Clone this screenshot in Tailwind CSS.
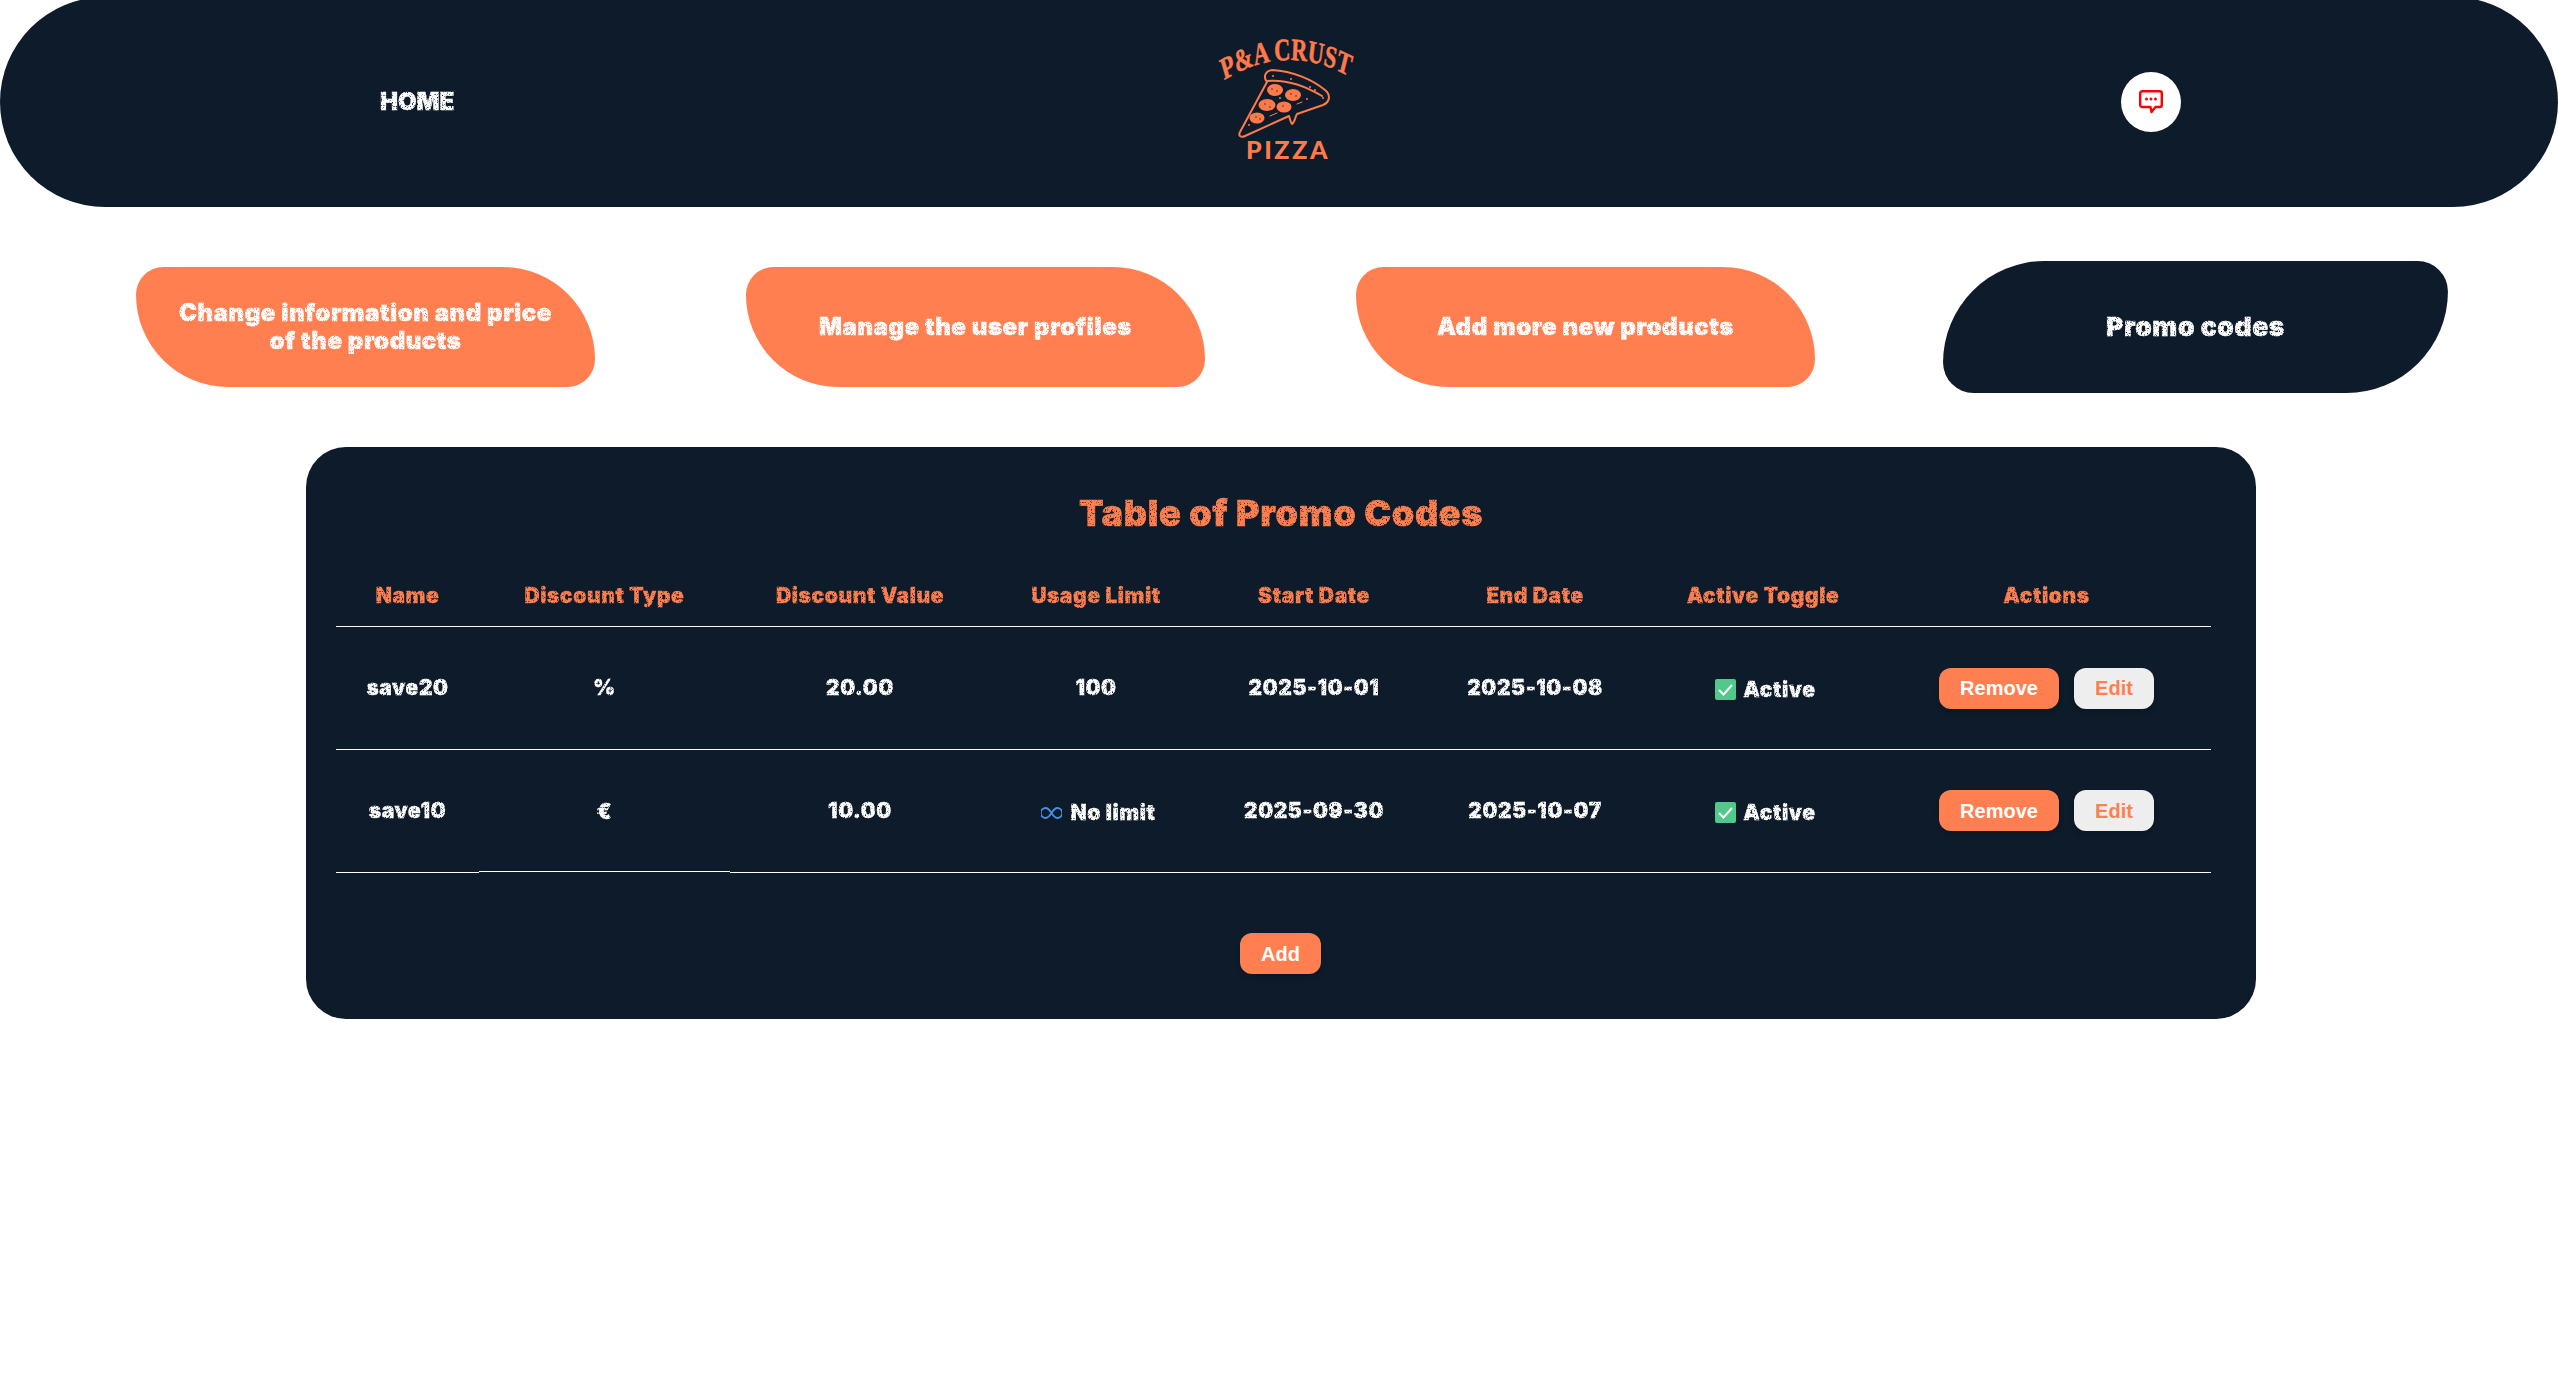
<!DOCTYPE html>
<html lang="en">
<head>
    <meta charset="UTF-8">
    <title>P&amp;A Crust Pizza - Promo Codes</title>
    <script src="https://cdn.jsdelivr.net/npm/@tailwindcss/browser@4"></script>
</head>
<body class="bg-white min-h-screen overflow-hidden font-['Inter',sans-serif]">
    <!-- speckle used on the heavy headings -->
    <svg width="0" height="0" class="absolute">
        <filter id="dirt" x="-2%" y="-10%" width="104%" height="120%">
            <feTurbulence type="fractalNoise" baseFrequency="0.8" numOctaves="2" seed="4" result="noise"/>
            <feColorMatrix in="noise" type="matrix" values="0 0 0 0 0  0 0 0 0 0  0 0 0 0 0  0 0 0 -5 3.9" result="mask"/>
            <feComposite in="SourceGraphic" in2="mask" operator="in"/>
        </filter>
    </svg>

    <!-- Header -->
    <header class="-mt-[3px] h-[210px] rounded-[105px] bg-[#0d1b2a] flex items-center justify-between pl-[380px] pr-[377px]">
        <a class="w-[73px] text-center text-[24px] font-black text-white [-webkit-text-stroke:0.5px_#fff] [filter:url(#dirt)]">HOME</a>
        <svg class="w-[160px] h-[144px]" viewBox="2 0 160 144" fill="none">
            <g transform="scale(.72 1)">
                <path id="logoArc" d="M27 50Q113 12 199 46"/>
                <text font-family="Liberation Serif" font-weight="700" font-size="31" fill="#ff7a4a" stroke="#ff7a4a" stroke-width=".6" text-anchor="middle"><textPath href="#logoArc" startOffset="50%">P&amp;A CRUST</textPath></text>
            </g>
            <g stroke="#ff7a4a" stroke-width="2" stroke-linejoin="round" stroke-linecap="round">
                <path d="M35 102L62 52C58 47 60 41 67 40C88 41 108 50 120 60C126 65 125 72 118 75L92 84C90 87 90 92 87 94C85 92 85 88 84 86L40 106C36 108 33 106 35 102Z"/>
                <path d="M62 51C84 49 102 57 117 66"/>
            </g>
            <g fill="#ff7a4a">
                <ellipse cx="70" cy="60" rx="8" ry="6"/>
                <ellipse cx="88" cy="65" rx="8" ry="6"/>
                <ellipse cx="62" cy="75" rx="8.5" ry="6"/>
                <ellipse cx="79" cy="77" rx="7.5" ry="5.5"/>
                <ellipse cx="52" cy="88" rx="7.5" ry="5.5"/>
                <circle cx="68" cy="46" r="1"/><circle cx="86" cy="49" r="1"/><circle cx="105" cy="57" r="1"/><circle cx="110" cy="60" r="1"/>
                <circle cx="75" cy="68" r="1"/><circle cx="102" cy="69" r="1"/><circle cx="44" cy="95" r="1"/><circle cx="118" cy="68" r="1"/>
            </g>
            <g fill="#0d1b2a">
                <circle cx="67" cy="59" r=".7"/><circle cx="72" cy="61" r=".7"/><circle cx="86" cy="64" r=".7"/><circle cx="91" cy="66" r=".7"/>
                <circle cx="60" cy="74" r=".7"/><circle cx="65" cy="77" r=".7"/><circle cx="78" cy="76" r=".7"/><circle cx="51" cy="87" r=".7"/><circle cx="55" cy="89" r=".7"/>
            </g>
            <path d="M65 86L72 83M92 74L97 72" stroke="#ff7a4a" stroke-width="1" stroke-linecap="round"/>
            <text x="83" y="129" font-family="Lato" font-weight="900" font-size="25" letter-spacing="2.6" fill="#ff7a4a" text-anchor="middle">PIZZA</text>
        </svg>
        <button class="w-[60px] h-[60px] rounded-full bg-white flex items-center justify-center">
            <svg class="w-6 h-6" viewBox="0 0 24 24" fill="none">
                <path d="M3.2 1.2H20.8A2 2 0 0 1 22.8 3.2V15A2 2 0 0 1 20.8 17H16.5L12.5 22L11.5 17H3.2A2 2 0 0 1 1.2 15V3.2A2 2 0 0 1 3.2 1.2Z" stroke="#ff0000" stroke-width="2.4" stroke-linejoin="round"/>
                <circle cx="7.5" cy="9" r="1.5" fill="#ff0000"/><circle cx="12" cy="9" r="1.5" fill="#ff0000"/><circle cx="16.5" cy="9" r="1.5" fill="#ff0000"/>
            </svg>
        </button>
    </header>

    <!-- Admin navigation -->
    <nav class="mt-[60px] pl-[136px] flex gap-[151px] text-[24px] leading-[28px] font-black tracking-[0.55px] text-white [-webkit-text-stroke:0.5px_#fff]">
        <a class="w-[459px] h-[120px] px-[33px] flex items-center justify-center text-center bg-[#ff7f50] rounded-[30px_100px_30px_100px]"><span class="[filter:url(#dirt)]">Change information and price of the products</span></a>
        <a class="w-[459px] h-[120px] px-[33px] flex items-center justify-center text-center bg-[#ff7f50] rounded-[30px_100px_30px_100px]"><span class="[filter:url(#dirt)]">Manage the user profiles</span></a>
        <a class="w-[459px] h-[120px] px-[33px] flex items-center justify-center text-center bg-[#ff7f50] rounded-[30px_100px_30px_100px]"><span class="[filter:url(#dirt)]">Add more new products</span></a>
        <a class="w-[459px] h-[120px] px-[33px] flex items-center justify-center text-center bg-[#0d1b2a] rounded-[100px_30px_100px_30px] scale-110"><span class="[filter:url(#dirt)]">Promo codes</span></a>
    </nav>

    <!-- Promo codes -->
    <main class="mt-[60px] ml-[306px] w-[1950px] rounded-[40px] bg-[#0d1b2a] pt-[44px] pb-[45px] px-[30px]">
        <h2 class="h-[44px] leading-[44px] text-center text-[36px] font-black tracking-[0.65px] text-[#ff7f50] [-webkit-text-stroke:0.6px_#ff7f50]"><span class="inline-block [filter:url(#dirt)]">Table of Promo Codes</span></h2>
        <table class="mt-[31px] w-[1875px] table-fixed border-separate border-spacing-0 text-[21px] tracking-[0.6px] font-black text-white text-center [-webkit-text-stroke:0.4px_currentColor]">
            <colgroup>
                <col class="w-[143px]"><col class="w-[251px]"><col class="w-[260px]"><col class="w-[212px]">
                <col class="w-[224px]"><col class="w-[218px]"><col class="w-[238px]"><col class="w-[329px]">
            </colgroup>
            <thead class="text-[#ff7f50]">
                <tr>
                    <th class="h-[61px] border-b border-white font-black"><span class="inline-block [filter:url(#dirt)]">Name</span></th>
                    <th class="h-[61px] border-b border-white font-black"><span class="inline-block [filter:url(#dirt)]">Discount Type</span></th>
                    <th class="h-[61px] border-b border-white font-black"><span class="inline-block [filter:url(#dirt)]">Discount Value</span></th>
                    <th class="h-[61px] border-b border-white font-black"><span class="inline-block [filter:url(#dirt)]">Usage Limit</span></th>
                    <th class="h-[61px] border-b border-white font-black"><span class="inline-block [filter:url(#dirt)]">Start Date</span></th>
                    <th class="h-[61px] border-b border-white font-black"><span class="inline-block [filter:url(#dirt)]">End Date</span></th>
                    <th class="h-[61px] border-b border-white font-black"><span class="inline-block [filter:url(#dirt)]">Active Toggle</span></th>
                    <th class="h-[61px] border-b border-white font-black"><span class="inline-block [filter:url(#dirt)]">Actions</span></th>
                </tr>
            </thead>
            <tbody>
                <tr>
                    <td class="h-[123px] border-b border-white"><span class="inline-block [filter:url(#dirt)]">save20</span></td>
                    <td class="h-[123px] border-b border-white"><span class="inline-block [filter:url(#dirt)]">%</span></td>
                    <td class="h-[123px] border-b border-white"><span class="inline-block [filter:url(#dirt)]">20.00</span></td>
                    <td class="h-[123px] border-b border-white"><span class="inline-block [filter:url(#dirt)]">100</span></td>
                    <td class="h-[123px] border-b border-white"><span class="inline-block [filter:url(#dirt)]">2025-10-01</span></td>
                    <td class="h-[123px] border-b border-white"><span class="inline-block [filter:url(#dirt)]">2025-10-08</span></td>
                    <td class="h-[123px] border-b border-white">
                        <div class="mt-[3px] pl-[5px] flex items-center justify-center gap-[7px]">
                            <svg class="w-[21px] h-[21px]" viewBox="0 0 21 21"><rect width="21" height="21" rx="2" fill="#50c98a"/><path d="M4 11L8.5 15.5L17 6" fill="none" stroke="#fff" stroke-width="2"/></svg>
                            <span class="[filter:url(#dirt)]">Active</span>
                        </div>
                    </td>
                    <td class="h-[123px] border-b border-white">
                        <div class="flex items-center justify-center gap-[15px] tracking-normal [-webkit-text-stroke:0]">
                            <button class="w-[120px] h-[41px] rounded-xl bg-[#ff7f50] text-white text-[20px] font-bold font-['Liberation_Sans',sans-serif] shadow-md">Remove</button>
                            <button class="w-[80px] h-[41px] rounded-xl bg-[#eeeeee] text-[#ff7f50] text-[20px] font-bold font-['Liberation_Sans',sans-serif] shadow-md">Edit</button>
                        </div>
                    </td>
                </tr>
                <tr>
                    <td class="h-[123px] border-b border-white"><span class="inline-block [filter:url(#dirt)]">save10</span></td>
                    <td class="relative h-[123px]"><span class="inline-block [filter:url(#dirt)]">€</span><i class="absolute inset-x-0 bottom-[1px] h-px bg-white"></i></td>
                    <td class="h-[123px] border-b border-white"><span class="inline-block [filter:url(#dirt)]">10.00</span></td>
                    <td class="h-[123px] border-b border-white">
                        <div class="mt-[3px] pl-[5px] flex items-center justify-center gap-[8px]">
                            <svg class="w-[21px] h-[12px]" viewBox="0 0 21 12" fill="none"><path d="M10.5 6C8.5 3 7 1 4.8 1A5 5 0 0 0 4.8 11C7 11 8.5 9 10.5 6C12.5 3 14 1 16.2 1A5 5 0 0 1 16.2 11C14 11 12.5 9 10.5 6Z" stroke="#4a90e2" stroke-width="1.8"/></svg>
                            <span class="[filter:url(#dirt)]">No limit</span>
                        </div>
                    </td>
                    <td class="h-[123px] border-b border-white"><span class="inline-block [filter:url(#dirt)]">2025-09-30</span></td>
                    <td class="h-[123px] border-b border-white"><span class="inline-block [filter:url(#dirt)]">2025-10-07</span></td>
                    <td class="h-[123px] border-b border-white">
                        <div class="mt-[3px] pl-[5px] flex items-center justify-center gap-[7px]">
                            <svg class="w-[21px] h-[21px]" viewBox="0 0 21 21"><rect width="21" height="21" rx="2" fill="#50c98a"/><path d="M4 11L8.5 15.5L17 6" fill="none" stroke="#fff" stroke-width="2"/></svg>
                            <span class="[filter:url(#dirt)]">Active</span>
                        </div>
                    </td>
                    <td class="h-[123px] border-b border-white">
                        <div class="-mt-px flex items-center justify-center gap-[15px] tracking-normal [-webkit-text-stroke:0]">
                            <button class="w-[120px] h-[41px] rounded-xl bg-[#ff7f50] text-white text-[20px] font-bold font-['Liberation_Sans',sans-serif] shadow-md">Remove</button>
                            <button class="w-[80px] h-[41px] rounded-xl bg-[#eeeeee] text-[#ff7f50] text-[20px] font-bold font-['Liberation_Sans',sans-serif] shadow-md">Edit</button>
                        </div>
                    </td>
                </tr>
            </tbody>
        </table>
        <div class="mt-[60px] pr-[1px] flex justify-center">
            <button class="w-[81px] h-[41px] rounded-xl bg-[#ff7f50] text-white text-[20px] font-bold font-['Liberation_Sans',sans-serif] shadow-md">Add</button>
        </div>
    </main>
</body>
</html>
